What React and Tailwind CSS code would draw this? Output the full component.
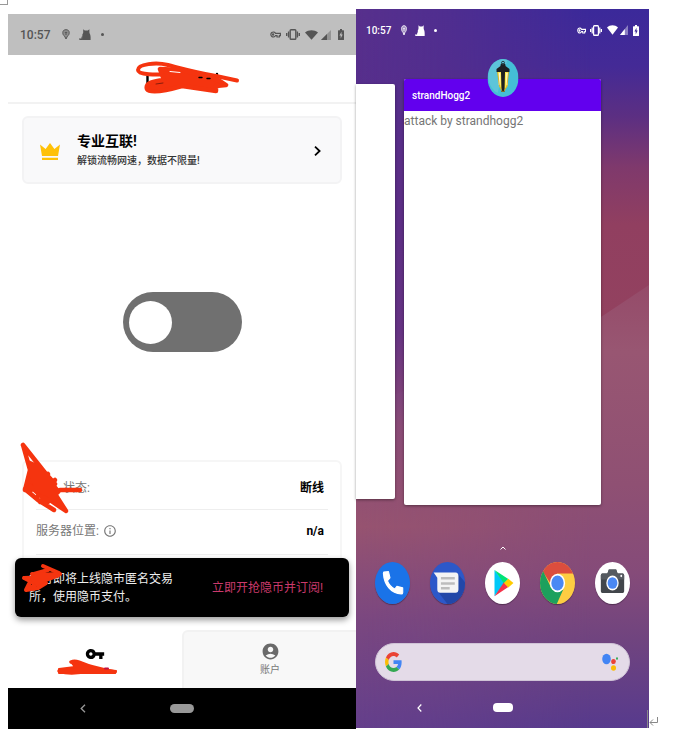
import React from "react";
import { MdAccountCircle, MdInfoOutline, MdVpnKey } from "react-icons/md";

const INK = "#f5340f";

const WIDE = {
  time: "text-[12px]",
  pin: "ml-3 h-[11px] w-2",
  cat: "ml-[9px] h-[11px] w-3",
  dot: "ml-[10px] size-[3px]",
  key: "h-[7px] w-[11px]",
  vibrate: "ml-[5px] h-[11px] w-[14px]",
  wifi: "ml-[5px] h-[10px] w-[13px]",
  signal: "ml-[3px] h-[10px] w-[10px]",
  battery: "ml-[7px] h-[11px] w-[6px]",
};

const NARROW = {
  time: "text-[10px]",
  pin: "ml-[10px] h-[11px] w-[6px]",
  cat: "ml-2 h-[11px] w-[10px]",
  dot: "ml-[9px] size-[3px]",
  key: "h-[7px] w-[9px]",
  vibrate: "ml-1 h-[11px] w-3",
  wifi: "ml-[5px] h-[10px] w-[11px]",
  signal: "ml-[2px] h-[10px] w-[8px]",
  battery: "ml-[5px] h-[11px] w-[6px]",
};

function StatusBar({ className, sizes }) {
  return (
    <div className={`flex items-center ${className}`}>
      <span className={`font-medium ${sizes.time}`}>10:57</span>
      <svg className={sizes.pin} viewBox="0 0 8 11" preserveAspectRatio="none" fill="none" stroke="currentColor">
        <path d="M4 10 L2.6 7.2 C1.2 6.3 .8 5 .8 3.6 C.8 1.6 2.2.7 4 .7 S7.2 1.6 7.2 3.6 C7.2 5 6.8 6.3 5.4 7.2 Z" fill="currentColor" fillOpacity=".45" />
        <path d="M2.8 3.4h2.4M3 5h2" />
      </svg>
      <svg className={sizes.cat} viewBox="0 0 12 11" preserveAspectRatio="none" fill="currentColor">
        <path d="M3.2 11V7.2C2.6 7.6 2.4 8.4 2.4 9.4H0V10.4C1 11 2 11 3.2 11ZM3.2 11 3.4 5.2C3.8 4.6 4.2 4.2 4.2 3.4V.2L5.8 1.6H8.8L10.4.2V3.4C10.6 4.6 11.6 5.6 11.6 8V11Z" />
      </svg>
      <span className={`rounded-full bg-current ${sizes.dot}`} />
      <div className="ml-auto flex items-center">
        <svg className={sizes.key} viewBox="0 0 11 7" preserveAspectRatio="none" fill="none" stroke="currentColor" strokeWidth="1.2">
          <path d="M5.6 2.4A2.5 2.5 0 1 0 5.6 4.6H7V6H9.4V4.6H10.4V2.4Z" />
          <circle cx="3.1" cy="3.5" r=".6" />
        </svg>
        <svg className={sizes.vibrate} viewBox="0 0 14 11" preserveAspectRatio="none" fill="none" stroke="currentColor" strokeWidth="1.4">
          <rect x="4.2" y=".8" width="5.6" height="9.4" rx=".8" />
          <path d="M2.6 2.6v5.8M11.4 2.6v5.8M.7 4v3M13.3 4v3" />
        </svg>
        <svg className={sizes.wifi} viewBox="0 0 12 10" preserveAspectRatio="none" fill="currentColor">
          <path d="M6 9.8 0 2.4C3.4-.5 8.6-.5 12 2.4Z" />
        </svg>
        <svg className={sizes.signal} viewBox="0 0 10 10" preserveAspectRatio="none" fill="currentColor">
          <path d="M10 0V10H0Z" opacity=".4" />
          <path d="M6 4V10H0Z" />
        </svg>
        <svg className={sizes.battery} viewBox="0 0 6 11" preserveAspectRatio="none" fill="currentColor">
          <path fillRule="evenodd" d="M2 0H4V1.2H5.4Q6 1.2 6 1.8V10.4Q6 11 5.4 11H.6Q0 11 0 10.4V1.8Q0 1.2.6 1.2H2ZM3.5 2.8 1.4 6.6H2.7V9.4L4.7 5.6H3.5Z" />
        </svg>
      </div>
    </div>
  );
}

function VpnPhone() {
  return (
    <section className="relative mt-[14px] flex flex-col self-start bg-white">
      <StatusBar className="h-[41px] bg-[#bfbfbf] px-3 text-[#555]" sizes={WIDE} />

      <header className="flex h-[49px] items-center justify-center border-b-2 border-[#f2f2f2]">
        <svg className="h-[37px] w-[116px]" viewBox="124 59 116 37" fill="none" stroke={INK} strokeLinecap="round" strokeLinejoin="round">
          <path d="M147.5 75V84M217 73V78M197 76l8 1" stroke="#000" strokeWidth="2.4" />
          <path d="M170 73 C156 74 138 74 138 69 C138 63 156 61 168 64 C180 67 194 71 216 75 L237 79.5" strokeWidth="4" />
          <path d="M160 68 L182 69 L205 75 L220 80 L226 84 L216 85 L216 90 L182 85 C168 89 150 93 147 88 C145 82 154 80 164 79 Z" fill={INK} strokeWidth="4.5" />
          <path d="M170 70.5l10 1" stroke="#fff" strokeWidth="1" />
          <path d="M199 76.5h3M207 77.5h3" stroke="#000" strokeWidth="1.4" />
          <path d="M156 83l7-1" stroke="#8a1d0c" strokeWidth="1" />
        </svg>
      </header>

      <div className="relative flex flex-col px-[14px] pb-[29px]">
        <button className="mt-3 flex h-[68px] items-center rounded-md border-2 border-[#f3f3f4] bg-[#f9f9fa] pt-[2px] pr-[19px] pl-4 text-left">
          <svg className="h-[17px] w-5" viewBox="0 0 20 17" fill="#ffc107">
            <path d="M2 13 0 1.6 5.6 6 10 0 14.4 6 20 1.6 18 13ZM2 14.8H18V17H2Z" />
          </svg>
          <span className="ml-[17px] flex flex-col">
            <span className="text-[14px] leading-5 font-bold text-black">专业互联!</span>
            <span className="text-[10px] leading-5 font-medium text-[#333]">解锁流畅网速，数据不限量!</span>
          </span>
          <svg className="ml-auto h-[10px] w-[7px]" viewBox="0 0 7 10" fill="none" stroke="#000" strokeWidth="1.8">
            <path d="M1 .7 5.6 5 1 9.3" />
          </svg>
        </button>

        <input
          type="checkbox"
          role="switch"
          aria-label="VPN"
          className="mt-[108px] flex h-[60px] w-[119px] appearance-none items-center self-center rounded-full bg-[#707070] pl-[6px] before:size-[43px] before:rounded-full before:bg-white before:content-['']"
        />

        <div className="relative mt-[108px] rounded-md border-2 border-[#f6f6f6] px-3 pb-[44px] text-[12px] text-[#777]">
          <div className="flex h-12 items-center justify-between border-b border-[#eee] pt-1 pr-1">
            <span className="pl-[27px]">状态:</span>
            <strong className="font-bold text-black">断线</strong>
          </div>
          <div className="flex h-[45px] items-center justify-between border-b border-[#eee] pr-1 pb-[2px]">
            <span className="flex items-center gap-1">
              服务器位置: <MdInfoOutline className="size-[14px]" />
            </span>
            <strong className="font-bold text-black">n/a</strong>
          </div>
          <svg className="absolute -top-[20px] -left-1 h-[74px] w-[66px]" viewBox="20 440 66 74" fill="none" stroke={INK} strokeWidth="4.5" strokeLinecap="round" strokeLinejoin="round">
            <path d="M23 443 L46 472 L55 482 M23 443 L30 468 L25 488 L38 466 L31 488 L48 472 L38 494 L55 478 L45 497 L60 488 L80 488" />
            <path d="M25 487 L46 484 L58 490 L48 500 L30 484 M32 472 L56 498 M26 488 L38 498 L54 508 M38 490 L66 509 L50 484 M40 500 L50 490 L65 508" />
            <path d="M28 458 L38 462 L50 476 L60 488 L50 496 L36 490 L30 476Z" fill={INK} stroke="none" />
          </svg>
        </div>

        <div className="absolute right-[7px] bottom-[13px] left-[7px] flex h-[59px] items-center justify-between rounded-md bg-black pr-[26px] pl-[14px] text-[12px] shadow-[0_3px_6px_rgba(0,0,0,0.4)]">
          <p className="w-[146px] leading-[18px] text-[#eee]">本行即将上线隐市匿名交易所，使用隐币支付。</p>
          <button className="text-[#cb3a6c]">立即开抢隐币并订阅!</button>
          <svg className="absolute top-[5px] left-[6px] h-8 w-[44px]" viewBox="21 563 44 32" fill="none" stroke={INK} strokeWidth="4" strokeLinecap="round" strokeLinejoin="round">
            <path d="M43 566 L59 573 L50 577 L24 578 L40 582 L26 590 L34 574 L48 570 M24 578 L36 584 L46 583 L38 588 L26 590 M32 574 L50 578 L60 574" />
            <path d="M36 573 L58 572 L60 577 L46 582 L36 586 L30 579Z" fill={INK} stroke="none" />
          </svg>
        </div>
      </div>

      <nav className="grid h-[58px] grid-cols-2">
        <button className="flex flex-col items-center pt-[14px] text-black">
          <MdVpnKey className="size-5" />
          <svg className="-mt-[6px] mr-4 h-[18px] w-[62px]" viewBox="57 658 62 18" fill="none" stroke={INK} strokeLinecap="round" strokeLinejoin="round">
            <path d="M72 662 C78 659 84 665 94 667 L106 670 L116 672 L94 670 L60 671 C72 675 84 672 90 670" strokeWidth="3.5" />
            <path d="M60 669 L76 667 L72 662 L84 664 L100 669 L117 671 L116 673 L82 673 L60 673Z" fill={INK} strokeWidth="2" />
            <path d="M106 668.5h3" stroke="#c2113f" strokeWidth="2" />
          </svg>
        </button>
        <button className="flex flex-col items-center rounded-tl-md border-t-2 border-l-2 border-[#f2f2f2] bg-[#f8f8f8] pt-[10px] text-[#777]">
          <MdAccountCircle className="size-[19px] text-[#6a6a6a]" />
          <span className="text-[10px] leading-[18px]">账户</span>
        </button>
      </nav>

      <div className="flex h-[41px] items-center bg-black">
        <button aria-label="Back" className="ml-[72px] text-[#999]">
          <svg className="h-[9px] w-[6px]" viewBox="0 0 6 9" fill="none" stroke="currentColor" strokeWidth="1.3">
            <path d="M5 .7 1.2 4.5 5 8.3" />
          </svg>
        </button>
        <button aria-label="Home" className="absolute left-1/2 h-[9px] w-6 -translate-x-1/2 rounded-full bg-[#999]" />
      </div>
    </section>
  );
}

function Wallpaper() {
  return (
    <svg className="absolute inset-0 h-full w-full" viewBox="0 0 293 719" preserveAspectRatio="none">
      <defs>
        <linearGradient id="right" x1="0" y1="0" x2="0" y2="1">
          <stop offset="0" stopColor="#3b299a" />
          <stop offset=".08" stopColor="#442a96" />
          <stop offset=".15" stopColor="#5c2f82" />
          <stop offset=".22" stopColor="#7f396c" />
          <stop offset=".3" stopColor="#913f60" />
          <stop offset=".46" stopColor="#93425f" />
        </linearGradient>
        <linearGradient id="lower" x1="0" y1="0" x2="0" y2="1">
          <stop offset="0" stopColor="#954b69" />
          <stop offset=".15" stopColor="#985672" />
          <stop offset=".45" stopColor="#8f5073" />
          <stop offset=".65" stopColor="#854b79" />
          <stop offset=".8" stopColor="#70447f" />
          <stop offset="1" stopColor="#573a8d" />
        </linearGradient>
        <linearGradient id="left" x1="0" y1="0" x2="0" y2="1">
          <stop offset="0" stopColor="#57308c" />
          <stop offset=".3" stopColor="#552c8b" />
          <stop offset=".45" stopColor="#5f3189" />
          <stop offset=".58" stopColor="#884a77" />
          <stop offset=".72" stopColor="#965370" />
          <stop offset=".85" stopColor="#7a4780" />
          <stop offset="1" stopColor="#643f8b" />
        </linearGradient>
        <linearGradient id="fade">
          <stop offset="0" stopColor="#fff" />
          <stop offset=".3" stopColor="#bbb" />
          <stop offset=".8" stopColor="#000" />
        </linearGradient>
        <mask id="side">
          <rect width="293" height="719" fill="url(#fade)" />
        </mask>
      </defs>
      <rect width="293" height="719" fill="url(#right)" />
      <path d="M0 400 245 308 293 276V719H0Z" fill="url(#lower)" />
      <rect width="293" height="719" fill="url(#left)" mask="url(#side)" />
    </svg>
  );
}

function AppIcon({ label, children }) {
  return (
    <button aria-label={label} className="h-[42px] w-[35px] overflow-hidden rounded-[50%] shadow-[0_1px_1px_rgba(0,0,0,0.35)]">
      <svg className="h-full w-full" viewBox="0 0 48 48" preserveAspectRatio="none">
        {children}
      </svg>
    </button>
  );
}

function Dock() {
  return (
    <div className="mt-3 flex justify-between px-[19px]">
      <AppIcon label="Phone">
        <rect width="48" height="48" fill="#1a73e8" />
        <path d="M12 11.5 18.5 11 20.5 18 17 21.5C19 26 22.5 29 27 31L30 28 38 29.5V35C38 36 37 36.5 36 36.5 22 36 12.5 26 11.5 13Z" fill="#fff" stroke="#fff" strokeWidth="1.5" strokeLinejoin="round" />
      </AppIcon>
      <AppIcon label="Messages">
        <rect width="48" height="48" fill="#2c58c9" />
        <path d="M38 13 48 23V48H24L11 34Z" fill="#2247a8" />
        <path d="M5 12H35Q39 12 39 16V31Q39 35 35 35H14Q10 35 10 31V18Z" fill="#f4f4f4" />
        <path d="M15 18.5H34M15 24.5H34M15 30H27" stroke="#bdbdbd" strokeWidth="3" />
      </AppIcon>
      <AppIcon label="Play Store">
        <rect width="48" height="48" fill="#fff" />
        <path d="M13 9V39L27 24Z" fill="#00c8f8" />
        <path d="M13 9 32 19.5 26 24.5Z" fill="#00e476" />
        <path d="M13 39 32 28.5 26 23Z" fill="#f5324a" />
        <path d="M32 19 39 24 32 29 26 24Z" fill="#ffcb00" />
      </AppIcon>
      <AppIcon label="Chrome">
        <rect width="48" height="48" fill="#fdcd42" />
        <path d="M0 0H48V13H24L14 24 4 11Z" fill="#dc4d3e" />
        <path d="M4 10 15 29 24 34 32 31 23 48H0V10Z" fill="#1da05d" />
        <circle cx="24" cy="24" r="10.5" fill="#fff" />
        <circle cx="24" cy="24" r="8.5" fill="#4a88f4" />
      </AppIcon>
      <AppIcon label="Camera">
        <rect width="48" height="48" fill="#fff" />
        <path d="M10 13H17L19 8.5H29L31 13H38Q40 13 40 15V33.5Q40 35.5 38 35.5H10Q8 35.5 8 33.5V15Q8 13 10 13Z" fill="#42464b" />
        <path d="M10 13H17L19 8.5H29L31 13H38Q40 13 40 15V20H8V15Q8 13 10 13Z" fill="#555a60" />
        <circle cx="24" cy="24" r="8.5" fill="#fff" />
        <circle cx="24" cy="24" r="6.7" fill="#4a88f4" />
        <circle cx="36" cy="16" r="1.3" fill="#fff" />
      </AppIcon>
    </div>
  );
}

function SearchBar() {
  return (
    <label className="mx-[19px] mt-[39px] flex h-[38px] items-center rounded-full border border-[#cfc3d6] bg-[#e4dbe8] pr-[11px] pl-[9px]">
      <svg className="h-5 w-[17px]" viewBox="0 0 48 48" preserveAspectRatio="none">
        <path fill="#ea4335" d="M24 9.5c3.54 0 6.71 1.22 9.21 3.6l6.85-6.85C35.9 2.38 30.47 0 24 0 14.62 0 6.51 5.38 2.56 13.22l7.98 6.19C12.43 13.72 17.74 9.5 24 9.5z" />
        <path fill="#4285f4" d="M46.98 24.55c0-1.57-.15-3.09-.38-4.55H24v9.02h12.94c-.58 2.96-2.26 5.48-4.78 7.18l7.73 6c4.51-4.18 7.09-10.36 7.09-17.65z" />
        <path fill="#fbbc05" d="M10.53 28.59c-.48-1.45-.76-2.99-.76-4.59s.27-3.14.76-4.59l-7.98-6.19C.92 16.46 0 20.12 0 24c0 3.88.92 7.54 2.56 10.78l7.97-6.19z" />
        <path fill="#34a853" d="M24 48c6.48 0 11.93-2.13 15.89-5.81l-7.73-6c-2.15 1.45-4.92 2.3-8.16 2.3-6.26 0-11.57-4.22-13.47-9.91l-7.98 6.19C6.51 42.62 14.62 48 24 48z" />
      </svg>
      <input type="search" aria-label="Search" className="w-0 min-w-0 flex-1 bg-transparent px-2 outline-none" />
      <svg className="h-[18px] w-4" viewBox="0 0 16 18">
        <ellipse cx="4.5" cy="6" rx="4.3" ry="5.2" fill="#4285f4" />
        <ellipse cx="11.5" cy="8.5" rx="2.3" ry="2.6" fill="#ea4335" />
        <ellipse cx="11.5" cy="15" rx="2.5" ry="2.8" fill="#fbbc05" />
        <ellipse cx="15" cy="5.5" rx="1" ry="1.2" fill="#34a853" />
      </svg>
    </label>
  );
}

function RecentsPhone() {
  return (
    <section className="relative mt-[9px] self-start">
      <Wallpaper />
      <div className="relative flex flex-col">
        <StatusBar className="h-[42px] px-[10px] text-white" sizes={NARROW} />

        <div className="mt-[28px] grid grid-cols-[39fr_9fr_197fr_48fr] items-start">
          <div className="mt-[5px] h-[415px] rounded-r-xs bg-white shadow-[0_1px_3px_rgba(0,0,0,0.4)]" />
          <div />
          <article className="relative h-[426px] rounded-xs bg-white shadow-[0_1px_3px_rgba(0,0,0,0.4)]">
            <h1 className="flex h-8 items-center rounded-t-xs bg-[#6200ee] pl-2 text-[10px] font-medium text-white">strandHogg2</h1>
            <p className="text-[12px] leading-5 text-[#757575]">attack by strandhogg2</p>
            <svg className="absolute -top-5 left-1/2 h-[38px] w-[31px] -translate-x-1/2" viewBox="0 0 31 38">
              <ellipse cx="15.5" cy="19" rx="15.5" ry="19" fill="#44bfd6" />
              <path d="M3 8C7 1 14-1 20 1L10 34C2 30-2 18 3 8Z" fill="#76cbdc" opacity=".5" />
              <path d="M10 12H21L20 27 16 33H15L11.5 27Z" fill="#fbe84a" />
              <path d="M12 14V26M19.5 14V26" stroke="#fffbd0" strokeWidth="1.5" />
              <path d="M9 13V10L13 7V5.5L15.5 4 18 5.5V7L22 10V13H17.5L17 33H14L13.5 13Z" fill="#1d2021" />
              <path d="M10 13 12 27 15 33M21 13 19.5 27 16 33" fill="none" stroke="#d6a81a" strokeWidth=".8" />
              <circle cx="15.5" cy="3.8" r="1.5" fill="none" stroke="#26464c" />
            </svg>
          </article>
        </div>

        <svg className="mt-[41px] h-1 w-[6px] self-center" viewBox="0 0 6 4" fill="none" stroke="#fff">
          <path d="M.5 3.5 3 1 5.5 3.5" />
        </svg>
        <Dock />
        <SearchBar />

        <div className="relative flex h-[47px] items-center pt-[6px]">
          <button aria-label="Back" className="ml-[61px] text-white">
            <svg className="h-2 w-[5px]" viewBox="0 0 5 8" fill="none" stroke="currentColor" strokeWidth="1.2">
              <path d="M4.3.5 1 4 4.3 7.5" />
            </svg>
          </button>
          <button aria-label="Home" className="absolute left-1/2 h-[9px] w-5 -translate-x-1/2 rounded bg-white" />
        </div>
      </div>
      <svg className="absolute -right-[10px] bottom-0 h-[18px] w-3 text-[#888]" viewBox="0 0 12 18" fill="none" stroke="currentColor">
        <path d="M.5 0V18M10.5 7V12.5H3M6 9.5 3 12.5 6 15.5" />
      </svg>
    </section>
  );
}

export default function App() {
  return (
    <main className="relative grid grid-cols-[minmax(0,348fr)_minmax(0,293fr)] bg-white pr-[47px] pb-[11px] pl-2 font-['Roboto','Noto_Sans_CJK_SC',sans-serif]">
      <div className="absolute top-0 left-0 h-[5px] w-2 border-r border-b border-[#999]" />
      <VpnPhone />
      <RecentsPhone />
    </main>
  );
}
